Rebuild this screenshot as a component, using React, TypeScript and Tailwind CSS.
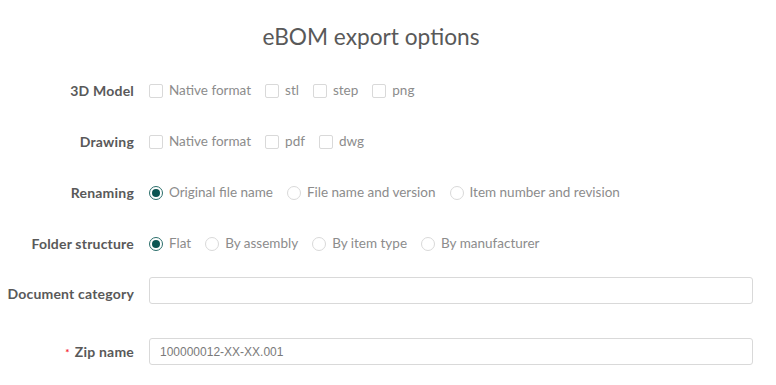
import React from 'react';

const font = { fontFamily: 'Lato, "Open Sans", sans-serif' };

const Checkbox = ({ label }: { label: string }) => (
  <label className="flex items-center mr-[14px]">
    <span className="w-[14px] h-[14px] border border-[#d9d9d9] rounded-[2px] bg-white" />
    <span className="ml-[6px] text-[13.5px] text-[#8c8c8c]">{label}</span>
  </label>
);

const Radio = ({ label, checked }: { label: string; checked?: boolean }) => (
  <label className="flex items-center mr-[14px]">
    <span
      className={
        checked
          ? 'w-[14px] h-[14px] rounded-full border border-[#2b6e6b] flex items-center justify-center'
          : 'w-[14px] h-[14px] rounded-full border border-[#d9d9d9]'
      }
    >
      {checked && <span className="w-[8px] h-[8px] rounded-full bg-[#0b5552]" />}
    </span>
    <span className="ml-[6px] text-[13.5px] text-[#8c8c8c]">{label}</span>
  </label>
);

const labelCls =
  'w-[134px] shrink-0 whitespace-nowrap text-right text-[14px] tracking-[0.2px] font-bold text-[#595959]';

const Row = ({ label, children }: { label: string; children: React.ReactNode }) => (
  <div className="flex items-center h-[51px]">
    <div className={labelCls}>{label}</div>
    <div className="ml-[15px] flex items-center flex-1">{children}</div>
  </div>
);

const inputCls =
  'ml-[15px] flex-1 h-[27px] border border-[#d9d9d9] rounded-[3px] px-[10px] text-[12px] text-[#7a7a7a] outline-none';

const App = () => {
  return (
    <div className="w-[776px] h-[385px] bg-white pr-[23px]" style={font}>
      <div className="h-[65px] flex items-center justify-center pt-[9px] pl-2 pr-[19px]">
        <h1 className="text-[22.7px] text-[#595959]">eBOM export options</h1>
      </div>
      <Row label="3D Model">
        <Checkbox label="Native format" />
        <Checkbox label="stl" />
        <Checkbox label="step" />
        <Checkbox label="png" />
      </Row>
      <Row label="Drawing">
        <Checkbox label="Native format" />
        <Checkbox label="pdf" />
        <Checkbox label="dwg" />
      </Row>
      <Row label="Renaming">
        <Radio label="Original file name" checked />
        <Radio label="File name and version" />
        <Radio label="Item number and revision" />
      </Row>
      <Row label="Folder structure">
        <Radio label="Flat" checked />
        <Radio label="By assembly" />
        <Radio label="By item type" />
        <Radio label="By manufacturer" />
      </Row>
      <div className="flex items-center mt-2 h-[27px]">
        <div className={`${labelCls} mt-[6px]`}>Document category</div>
        <input className={inputCls} style={{ fontFamily: '"Liberation Sans", Arial, sans-serif' }} />
      </div>
      <div className="flex items-center mt-[34px] h-[27px]">
        <div className={`${labelCls} flex items-center justify-end`}>
          <span className="text-[#f5222d] text-[10px] mr-[5px] leading-none">*</span>
          Zip name
        </div>
        <input
          className={inputCls}
          style={{ fontFamily: '"Liberation Sans", Arial, sans-serif' }}
          defaultValue="100000012-XX-XX.001"
        />
      </div>
    </div>
  );
};

export default App;
